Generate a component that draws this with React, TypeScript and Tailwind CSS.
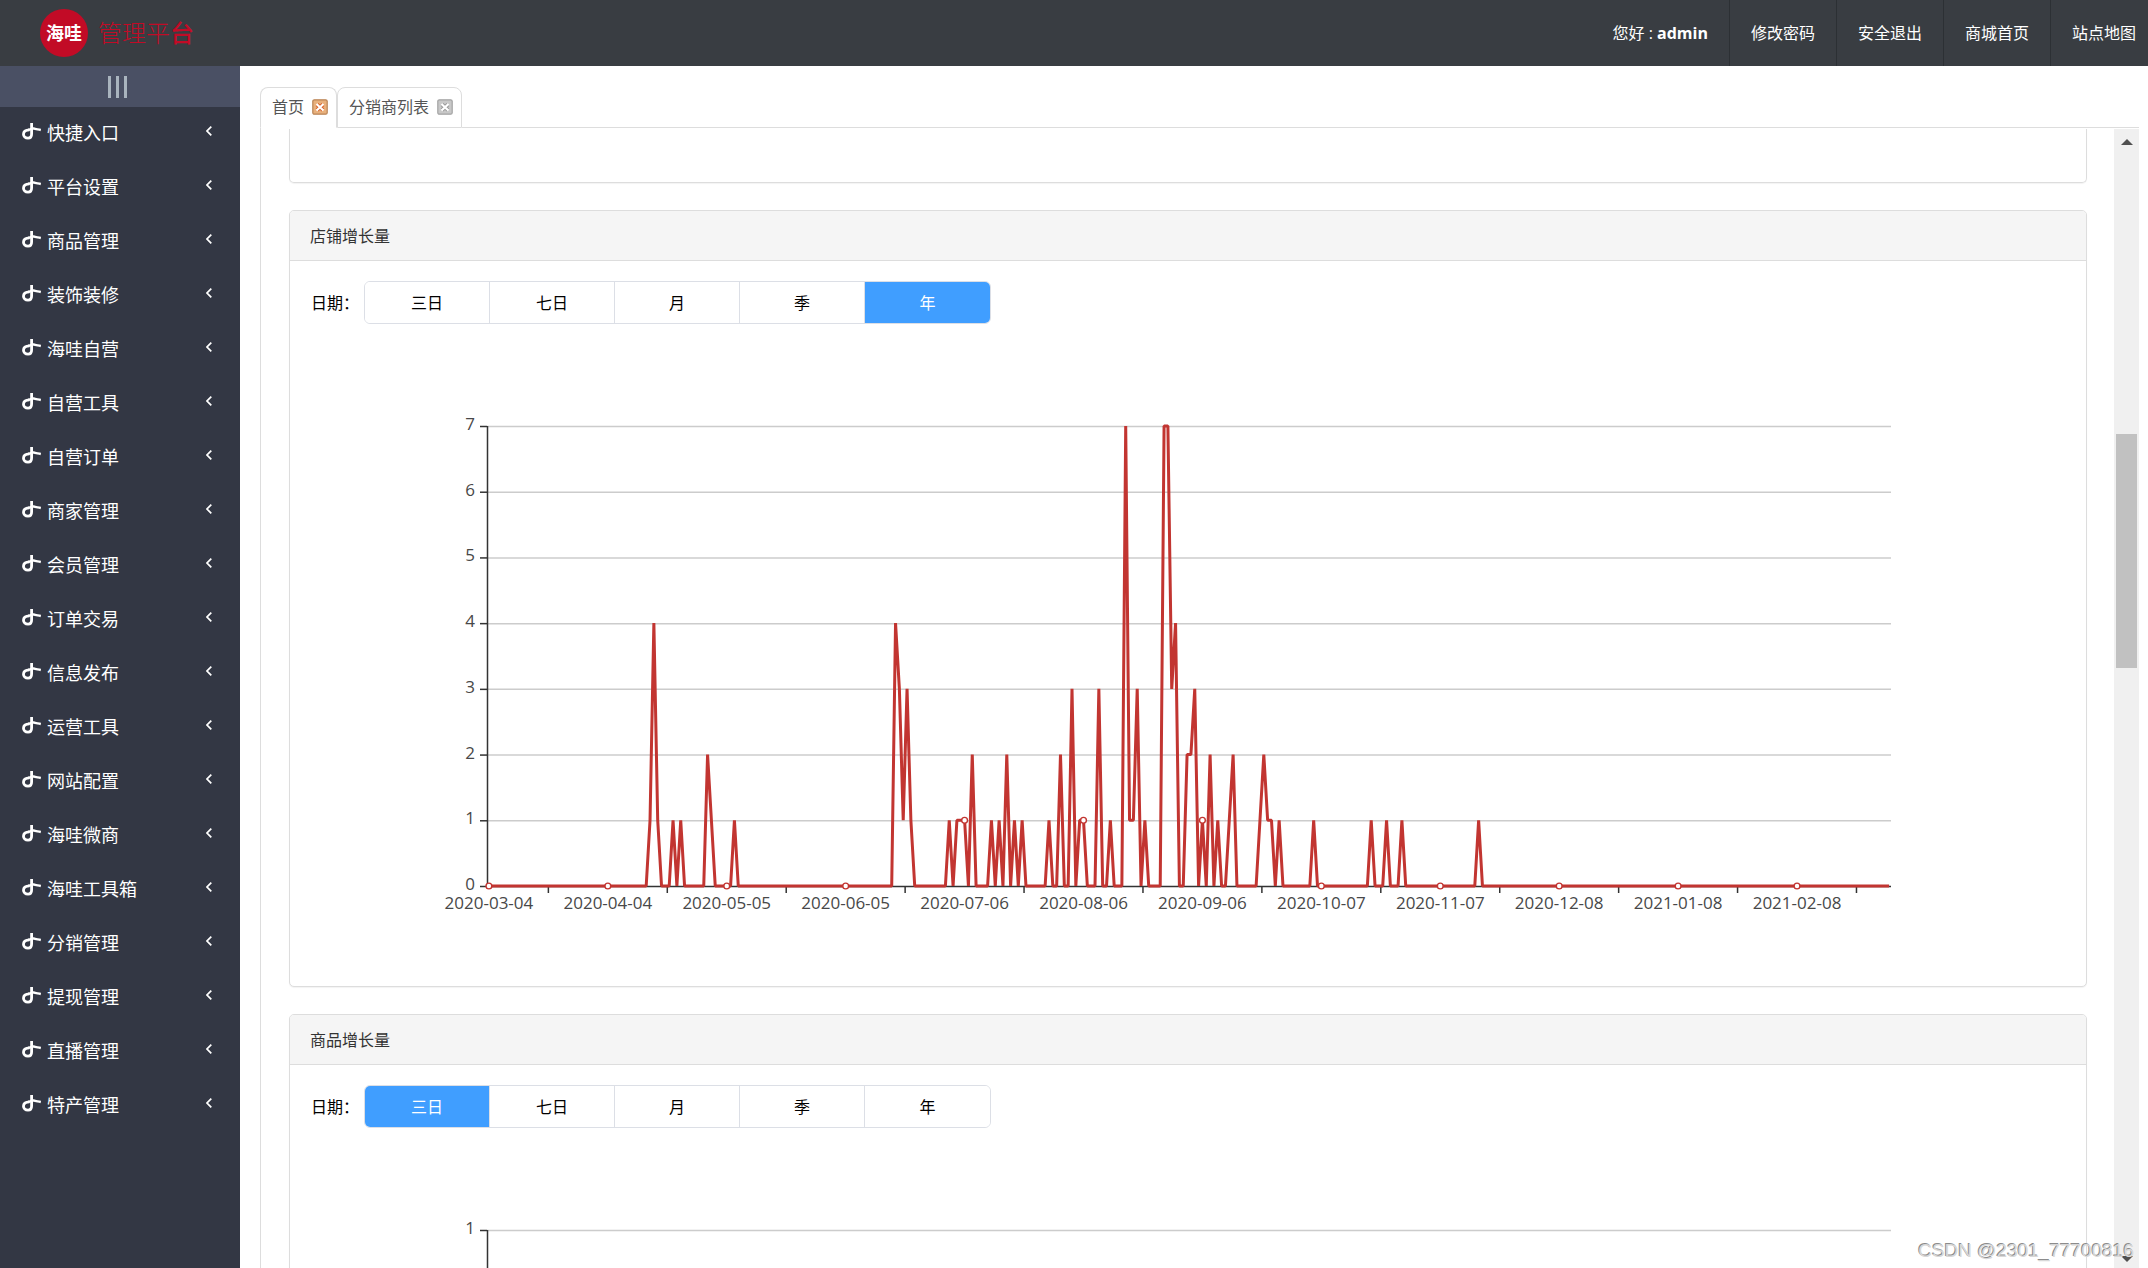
import { useState } from "react"

const MENU = [
  "快捷入口",
  "平台设置",
  "商品管理",
  "装饰装修",
  "海哇自营",
  "自营工具",
  "自营订单",
  "商家管理",
  "会员管理",
  "订单交易",
  "信息发布",
  "运营工具",
  "网站配置",
  "海哇微商",
  "海哇工具箱",
  "分销管理",
  "提现管理",
  "直播管理",
  "特产管理",
]

const TOP_LINKS = ["修改密码", "安全退出", "商城首页", "站点地图"]

const TABS = [
  { label: "首页", active: true },
  { label: "分销商列表", active: false },
]

const PERIODS = ["三日", "七日", "月", "季", "年"]

// New shops per day, keyed by days since 2020-03-04. Missing days are 0.
const SHOP_GROWTH: Record<number, number> = {
  42: 1, 43: 4, 44: 1, 48: 1, 50: 1, 57: 2, 58: 1, 64: 1,
  106: 4, 107: 3, 108: 1, 109: 3, 110: 1,
  120: 1, 122: 1, 123: 1, 124: 1, 126: 2,
  131: 1, 133: 1, 135: 2, 137: 1, 139: 1,
  146: 1, 149: 2, 152: 3, 154: 1, 155: 1, 159: 3, 162: 1,
  166: 7, 167: 1, 168: 1, 169: 3, 171: 1,
  176: 7, 177: 7, 178: 3, 179: 4, 182: 2, 183: 2, 184: 3,
  186: 1, 188: 2, 190: 1, 193: 1, 194: 2,
  201: 1, 202: 2, 203: 1, 204: 1, 206: 1, 215: 1,
  230: 1, 234: 1, 238: 1, 258: 1,
}

const DAYS = 366
const LABEL_STEP = 31
const START = Date.UTC(2020, 2, 4)

const WIDTH = 1756
const HEIGHT = 642
const LEFT = 177
const RIGHT = 1581
const TOP = 102
const BOTTOM = 562
const BAND = (RIGHT - LEFT) / DAYS

function dateLabel(day: number) {
  return new Date(START + day * 86400000).toISOString().slice(0, 10)
}

function LineChart({ title, data, max }: { title: string; data: Record<number, number>; max: number }) {
  const x = (day: number) => LEFT + BAND * (day + 0.5)
  const y = (value: number) => BOTTOM - ((BOTTOM - TOP) * value) / max
  const points = Array.from({ length: DAYS }, (_, day) => `${x(day)},${y(data[day] ?? 0)}`).join(" ")
  const labelDays = Array.from({ length: Math.ceil(DAYS / LABEL_STEP) }, (_, i) => i * LABEL_STEP)
  const steps = Array.from({ length: max + 1 }, (_, i) => i)

  return (
    <svg
      role="img"
      aria-label={title}
      viewBox={`0 0 ${WIDTH} ${HEIGHT}`}
      className="block h-auto w-full fill-[#484848] text-[17px]"
    >
      {steps.map((value) => (
        <g key={value}>
          {value > 0 && <line x1={LEFT} x2={RIGHT} y1={y(value) + 0.5} y2={y(value) + 0.5} stroke="#ccc" strokeWidth={1.5} />}
          <line x1={LEFT - 7} x2={LEFT} y1={y(value) + 0.5} y2={y(value) + 0.5} stroke="#333" strokeWidth={1.5} />
          <text x={LEFT - 12} y={y(value) + 4} textAnchor="end">
            {value}
          </text>
        </g>
      ))}

      <line x1={LEFT + 0.5} x2={LEFT + 0.5} y1={TOP} y2={BOTTOM} stroke="#333" strokeWidth={1.5} />
      <line x1={LEFT} x2={RIGHT} y1={BOTTOM + 0.5} y2={BOTTOM + 0.5} stroke="#333" strokeWidth={1.5} />

      {labelDays.map((day) => (
        <g key={day}>
          <line
            x1={x(day + 15.5)}
            x2={x(day + 15.5)}
            y1={BOTTOM}
            y2={BOTTOM + 7}
            stroke="#333"
            strokeWidth={1.5}
          />
          <text x={x(day)} y={BOTTOM + 23} textAnchor="middle">
            {dateLabel(day)}
          </text>
        </g>
      ))}

      <polyline points={points} fill="none" stroke="#c23531" strokeWidth={3} strokeLinejoin="bevel" />
      {labelDays.map((day) => (
        <circle
          key={day}
          cx={x(day)}
          cy={y(data[day] ?? 0)}
          r={2.9}
          fill="#fff"
          stroke="#c23531"
          strokeWidth={1.4}
        />
      ))}
    </svg>
  )
}

interface ChartCardProps {
  title: string
  data: Record<number, number>
  max: number
  initial: string
}

function ChartCard({ title, data, max, initial }: ChartCardProps) {
  const [period, setPeriod] = useState(initial)

  return (
    <section className="mt-[27px] rounded-[5px] border border-[#ddd] bg-white shadow-[0_1px_1px_rgba(0,0,0,0.05)]">
      <h2 className="flex h-[50px] items-center rounded-t border-b border-[#ddd] bg-[#f5f5f5] px-5 text-base text-[#333]">
        {title}
      </h2>
      <div className="p-5">
        <div className="flex items-center gap-[5px] text-base text-black">
          <span className="pl-px">日期：</span>
          <div
            role="group"
            aria-label={title}
            className="flex h-[43px] overflow-hidden rounded-md border border-[#dcdfe6] divide-x divide-[#dcdfe6]"
          >
            {PERIODS.map((name) => (
              <button
                key={name}
                type="button"
                aria-pressed={period === name}
                onClick={() => setPeriod(name)}
                className={`w-[125px] ${period === name ? "bg-[#409eff] text-white" : "bg-white"}`}
              >
                {name}
              </button>
            ))}
          </div>
        </div>
        <LineChart title={title} data={data} max={max} />
      </div>
    </section>
  )
}

function NoteIcon() {
  return (
    <svg viewBox="0 0 19 17" className="h-[17px] w-[19px] shrink-0" fill="none" stroke="currentColor" aria-hidden="true">
      <path
        d="M9.600 0V11C9.600 13.600 8.300 15.200 6 15.200C3.200 15.200 1.500 13.500 1.500 11.200C1.500 8.600 3.800 7 7.500 6.900"
        strokeWidth="2.800"
      />
      <path d="M6 6.700C8.500 6.900 9.500 5 11.500 5.400C13.500 6.300 16 6.300 18.800 7" strokeWidth="2.400" />
    </svg>
  )
}

function CloseIcon({ active }: { active: boolean }) {
  return (
    <svg viewBox="0 0 16 16" className="size-4" aria-hidden="true">
      <rect
        x="0.800"
        y="0.800"
        width="14.400"
        height="14.400"
        rx="1.500"
        fill={active ? "#e8b07c" : "#c8c8c8"}
        stroke={active ? "#b98354" : "#a3a3a3"}
        strokeWidth="1.200"
      />
      <path d="M5 5.500L11 11M11 5.500L5 11" stroke={active ? "#d8622c" : "#999"} strokeWidth="4" />
      <path d="M4.500 5L11.500 11.500M11.500 5L4.500 11.500" stroke="#fff" strokeWidth="2.200" />
    </svg>
  )
}

function Header() {
  return (
    <header className="flex h-[66px] shrink-0 items-center justify-between bg-[#393d42] text-white">
      <a href="#" className="flex items-center gap-2.5 pl-10">
        <span className="flex size-12 items-center justify-center rounded-full bg-[#c20b26] text-lg font-bold">
          海哇
        </span>
        <span className="text-2xl font-light text-[#c20b26]">
          管理平<span className="font-medium">台</span>
        </span>
      </a>
      <nav className="flex h-full items-stretch text-base">
        <span className="flex items-center px-[21px]">
          您好 :&nbsp;<b>admin</b>
        </span>
        {TOP_LINKS.map((label) => (
          <a
            key={label}
            href="#"
            className="flex items-center border-l border-[#2c3034] px-[21px] last:pr-3"
          >
            {label}
          </a>
        ))}
      </nav>
    </header>
  )
}

function Sidebar() {
  return (
    <aside className="w-60 shrink-0 bg-[#333744] text-white">
      <button
        type="button"
        aria-label="菜单"
        className="flex h-[41px] w-full items-center justify-center gap-[5px] bg-[#4a5064] pr-1.5"
      >
        <span className="h-[22px] w-[3px] bg-[#a9b4be]" />
        <span className="h-[22px] w-[3px] bg-[#a9b4be]" />
        <span className="h-[22px] w-[3px] bg-[#a9b4be]" />
      </button>
      <ul>
        {MENU.map((label) => (
          <li key={label}>
            <a href="#" className="flex h-[54px] items-center gap-1.5 pr-7 pb-1.5 pl-[22px]">
              <NoteIcon />
              <span className="grow pt-1 text-lg leading-6">{label}</span>
              <svg viewBox="0 0 6 10" className="h-2.5 w-1.5" fill="none" stroke="currentColor" aria-hidden="true">
                <path d="M5.300 0.700L1 5L5.300 9.300" strokeWidth="1.700" />
              </svg>
            </a>
          </li>
        ))}
      </ul>
    </aside>
  )
}

function Tabs() {
  return (
    <div className="flex h-[41px] shrink-0">
      {TABS.map((tab) => (
        <div
          key={tab.label}
          className={`flex items-center gap-2 rounded-t-lg border border-[#ddd] bg-white pr-2 pb-0.5 pl-[11px] text-base text-[#555] ${
            tab.active ? "border-b-white" : ""
          }`}
        >
          <button type="button">{tab.label}</button>
          <button type="button" aria-label={`关闭${tab.label}`}>
            <CloseIcon active={tab.active} />
          </button>
        </div>
      ))}
      <div className="grow border-b border-[#ddd]" />
    </div>
  )
}

function Scrollbar() {
  return (
    <div className="flex w-[25px] shrink-0 flex-col items-center bg-[#f0f0f0] pt-2.5 pb-1.5" aria-hidden="true">
      <svg viewBox="0 0 12 6" className="h-1.5 w-3 fill-[#505050]">
        <path d="M0 6L6 0L12 6Z" />
      </svg>
      <div className="flex w-full grow flex-col px-0.5">
        <div className="grow-[289]" />
        <div className="h-[234px] bg-[#c1c1c1]" />
        <div className="grow-[588]" />
      </div>
      <svg viewBox="0 0 12 6" className="h-1.5 w-3 fill-[#505050]">
        <path d="M0 0L6 6L12 0Z" />
      </svg>
    </div>
  )
}

export default function App() {
  return (
    <div className="relative flex h-screen flex-col overflow-hidden bg-white font-['Open_Sans','Noto_Sans_CJK_SC',sans-serif]">
      <Header />
      <div className="flex min-h-0 grow">
        <Sidebar />
        <main className="flex min-w-0 grow flex-col pt-[21px] pr-[9px] pl-5">
          <Tabs />
          <div className="flex min-h-0 grow border-l border-[#ddd] pt-px">
            <div className="min-w-0 grow overflow-y-auto pr-[27px] pl-7 [scrollbar-width:none]">
              <div className="h-[54px] rounded-b-[5px] border border-t-0 border-[#ddd] shadow-[0_1px_1px_rgba(0,0,0,0.05)]" />
              <ChartCard title="店铺增长量" data={SHOP_GROWTH} max={7} initial="年" />
              <ChartCard title="商品增长量" data={{}} max={1} initial="三日" />
            </div>
            <Scrollbar />
          </div>
        </main>
      </div>
      <span className="pointer-events-none absolute right-3.5 bottom-[3px] font-['Liberation_Sans',sans-serif] text-[19px] text-[#d8d8d8] [text-shadow:-1px_-1px_0_#8c8c8c]">
        CSDN @2301_77700816
      </span>
    </div>
  )
}
